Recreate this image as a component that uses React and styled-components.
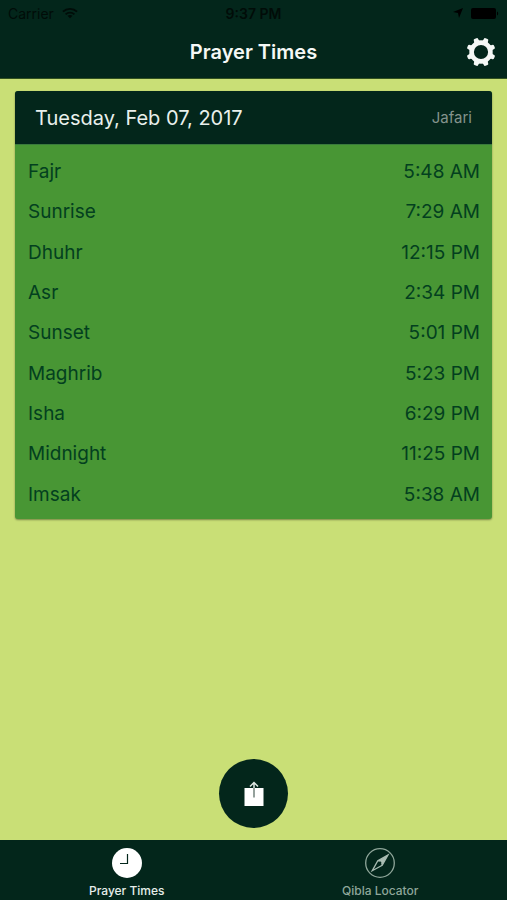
import React, { useState } from 'react';
import styled, { createGlobalStyle } from 'styled-components';

const times = [
  { name: 'Fajr', time: '5:48 AM' },
  { name: 'Sunrise', time: '7:29 AM' },
  { name: 'Dhuhr', time: '12:15 PM' },
  { name: 'Asr', time: '2:34 PM' },
  { name: 'Sunset', time: '5:01 PM' },
  { name: 'Maghrib', time: '5:23 PM' },
  { name: 'Isha', time: '6:29 PM' },
  { name: 'Midnight', time: '11:25 PM' },
  { name: 'Imsak', time: '5:38 AM' },
];

const WifiIcon = () => (
  <svg width="16" height="12" viewBox="0 0 17 12" fill="none" stroke="#010c08" strokeWidth="2">
    <path d="M1 4.6C5.2 0.6 11.8 0.6 16 4.6" />
    <path d="M3.8 7.4C6.4 5 10.6 5 13.2 7.4" />
    <path d="M8.5 11.6L5.9 9C7.3 7.7 9.7 7.7 11.1 9Z" fill="#010c08" stroke="none" />
  </svg>
);

const LocationIcon = () => (
  <svg width="10" height="10" viewBox="0 0 10 10">
    <path d="M10 0L6 10L5 5L0 4Z" fill="#000" />
  </svg>
);

const BatteryIcon = () => (
  <svg width="28" height="11" viewBox="0 0 28 11">
    <rect width="25" height="11" rx="2" fill="#000" />
    <path d="M26 3.5C27.6 4 27.6 7 26 7.5Z" fill="#000" />
  </svg>
);

const teeth = [22.5, 67.5, 112.5, 157.5, 202.5, 247.5, 292.5, 337.5];

const GearIcon = () => (
  <svg width="30" height="30" viewBox="0 0 30 30" fill="#f5f8f6">
    <circle cx="15" cy="15" r="9.4" fill="none" stroke="#f5f8f6" strokeWidth="4.6" />
    {teeth.map((angle) => (
      <path
        key={angle}
        d="M10.6 5.5C12.2 4.6 12.6 3.6 12.6 2.2Q12.6 0.5 13.9 0.5H16.1Q17.4 0.5 17.4 2.2C17.4 3.6 17.8 4.6 19.4 5.5Z"
        transform={`rotate(${angle} 15 15)`}
      />
    ))}
  </svg>
);

const ShareIcon = () => (
  <svg width="20" height="26" viewBox="0 0 20 26" fill="none">
    <rect x="0.5" y="7" width="19" height="18" fill="#fff" />
    <path d="M10 16.5V7" stroke="#5c6f68" strokeWidth="1.3" />
    <path d="M10 7V1.5M6 5.5L10 1.5L14 5.5" stroke="#dfe8e3" strokeWidth="1.5" />
  </svg>
);

const ClockIcon = () => (
  <svg width="30" height="30" viewBox="0 0 30 30">
    <circle cx="15" cy="15" r="15" fill="#fff" />
    <path d="M15.5 6V15.5H8" fill="none" stroke="#03261b" strokeWidth="1.2" />
  </svg>
);

const CompassIcon = () => (
  <svg width="30" height="30" viewBox="0 0 30 30">
    <circle cx="15" cy="15" r="14.3" fill="none" stroke="#8fa69a" strokeWidth="1.3" />
    <path d="M23 7L17.2 17.2L12.8 12.8Z" fill="#a9bcb2" />
    <path
      d="M23 7L17.2 17.2L7.3 22.7L12.8 12.8Z"
      fill="none"
      stroke="#a9bcb2"
      strokeWidth="1.3"
    />
    <circle cx="15" cy="15" r="1.4" fill="#03261b" />
  </svg>
);

const App = () => {
  const [tab, setTab] = useState('times');

  return (
    <Page>
      <GlobalStyle />
      <Header>
        <StatusBar>
          <Carrier>
            Carrier <WifiIcon />
          </Carrier>
          <Clock>9:37 PM</Clock>
          <StatusIcons>
            <LocationIcon />
            <BatteryIcon />
          </StatusIcons>
        </StatusBar>
        <NavBar>
          <Title>Prayer Times</Title>
          <SettingsButton type="button" aria-label="Settings">
            <GearIcon />
          </SettingsButton>
        </NavBar>
      </Header>

      <Content>
        <Card>
          <CardHeader>
            <CardDate>Tuesday, Feb 07, 2017</CardDate>
            <Method>Jafari</Method>
          </CardHeader>
          <CardBody>
            <TimesTable>
              <tbody>
                {times.map((item) => (
                  <tr key={item.name}>
                    <th scope="row">{item.name}</th>
                    <td>{item.time}</td>
                  </tr>
                ))}
              </tbody>
            </TimesTable>
          </CardBody>
        </Card>
        <ShareButton type="button" aria-label="Share">
          <ShareIcon />
        </ShareButton>
      </Content>

      <TabBar>
        <Tab type="button" $active={tab === 'times'} onClick={() => setTab('times')}>
          <ClockIcon />
          Prayer Times
        </Tab>
        <Tab type="button" $active={tab === 'qibla'} onClick={() => setTab('qibla')}>
          <CompassIcon />
          Qibla Locator
        </Tab>
      </TabBar>
    </Page>
  );
};

export default App;

const GlobalStyle = createGlobalStyle`
  * {
    box-sizing: border-box;
  }
  body {
    margin: 0;
    background: #c9df76;
    font-family: Inter, "Liberation Sans", sans-serif;
  }
  button {
    border: 0;
    padding: 0;
    background: none;
    font-family: inherit;
    cursor: pointer;
  }
  svg {
    display: block;
  }
`;

const Page = styled.div`
  min-height: 100vh;
  display: flex;
  flex-direction: column;
`;

const Header = styled.header`
  background: #03261b;
  border-bottom: 1px solid #32511f;
`;

const StatusBar = styled.div`
  display: grid;
  grid-template-columns: 1fr auto 1fr;
  align-items: center;
  height: 26px;
  padding: 0 8px;
  color: #010c08;
  font-size: 14px;
`;

const Carrier = styled.span`
  display: flex;
  align-items: center;
  gap: 8px;
`;

const Clock = styled.span`
  font-weight: 600;
`;

const StatusIcons = styled.span`
  display: flex;
  align-items: center;
  justify-content: flex-end;
  gap: 8px;
`;

const NavBar = styled.div`
  display: grid;
  grid-template-columns: 1fr auto 1fr;
  align-items: center;
  height: 52px;
  padding: 0 11px;
`;

const Title = styled.h1`
  grid-column: 2;
  margin: 0;
  color: #f5f8f6;
  font-size: 20px;
  font-weight: 600;
`;

const SettingsButton = styled.button`
  justify-self: end;
`;

const Content = styled.main`
  flex: 1;
  display: flex;
  flex-direction: column;
  justify-content: space-between;
  align-items: center;
  gap: 24px;
  padding: 12px 15px;
`;

const Card = styled.section`
  width: 100%;
  border-radius: 3px;
  overflow: hidden;
  background: #489634;
  box-shadow: 0 1px 2px rgba(0, 0, 0, 0.4);
`;

const CardHeader = styled.div`
  display: flex;
  align-items: center;
  justify-content: space-between;
  height: 54px;
  padding: 0 20px;
  background: #03261b;
  border-bottom: 1px solid #3a7a3c;
`;

const CardDate = styled.h2`
  margin: 0;
  color: #e9f0ec;
  font-size: 20px;
  font-weight: 400;
`;

const Method = styled.span`
  color: #84938c;
  font-size: 15px;
`;

const CardBody = styled.div`
  padding: 7px 12px 4px 13px;
`;

const TimesTable = styled.table`
  width: 100%;
  height: 363px;
  border-collapse: collapse;
  color: #03401f;
  font-size: 19px;
  line-height: 24px;

  th,
  td {
    padding: 8px 0;
    font-weight: 400;
    text-align: left;
  }
  td {
    text-align: right;
  }
`;

const ShareButton = styled.button`
  display: flex;
  align-items: center;
  justify-content: center;
  width: 69px;
  height: 69px;
  border-radius: 50%;
  background: #03261b;
`;

const TabBar = styled.nav`
  display: flex;
  height: 60px;
  background: #03261b;
`;

const Tab = styled.button`
  flex: 1;
  display: flex;
  flex-direction: column;
  align-items: center;
  gap: 5px;
  padding-top: 8px;
  color: ${(props) => (props.$active ? '#e6eeea' : '#8fa69a')};
  font-size: 12px;
  font-weight: 500;
  line-height: 16px;
`;
